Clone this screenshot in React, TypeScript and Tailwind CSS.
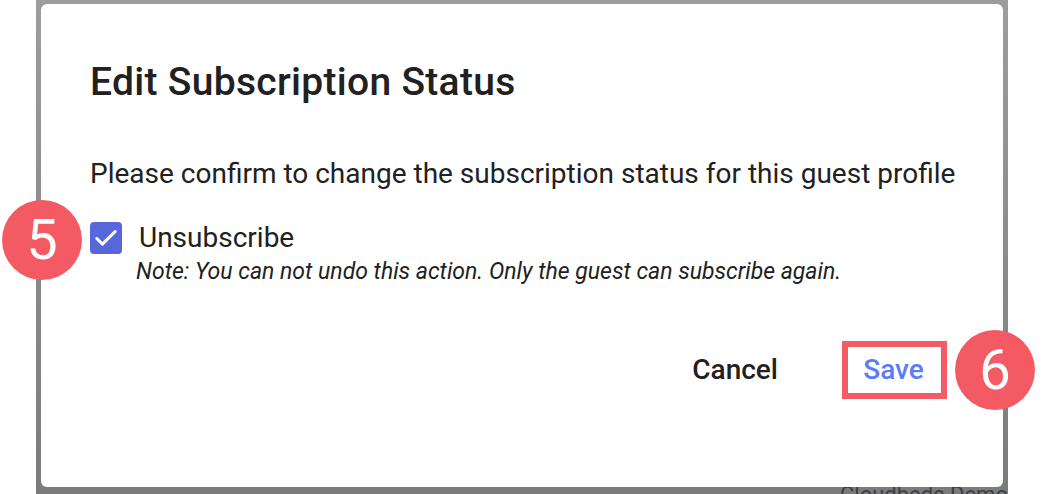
import React from 'react';

const font = { fontFamily: 'Roboto, "Noto Sans", sans-serif' };

// Numbered callout used in the annotated screenshot
function Badge({ n, className }: { n: string; className: string }) {
    return (
        <div className={`absolute w-[80px] h-[80px] rounded-full bg-[#f45a63] text-white flex items-center justify-center text-[56px] leading-none ${className}`}>
            {n}
        </div>
    );
}

export default function App() {
    return (
        <div className="relative w-[1042px] h-[494px] bg-white overflow-hidden" style={font}>
            <div className="flex h-full">
                <div className="w-[36px] bg-white" />
                {/* Backdrop */}
                <div className="relative w-[972px] h-full bg-gradient-to-b from-[#9d9d9d] to-[#7b7b7b] pt-[4px] pl-[5px]">
                    <div className="absolute left-[804px] top-[478px] text-[22px] text-[#3b3f46] whitespace-nowrap">Cloudbeds Demo</div>
                    {/* Dialog */}
                    <div className="relative w-[962px] h-[483px] bg-white rounded-[6px] pl-[49px] pt-[55px]">
                        <h2 className="text-[39px] font-medium text-[#212121] leading-[46px] tracking-[0.3px]">Edit Subscription Status</h2>
                        <p className="mt-[53px] text-[28px] text-[#212121] leading-[32px]">
                            Please confirm to change the subscription status for this guest profile
                        </p>
                        <div className="mt-[32px] flex items-center gap-[17px]">
                            <div className="w-[32px] h-[32px] rounded-[4px] bg-[#5866dc] flex items-center justify-center">
                                <svg width="26" height="26" viewBox="0 0 24 24" fill="none">
                                    <path d="M3.5 12.5l5.2 5.2L20.5 6" stroke="white" strokeWidth="2.8" strokeLinecap="round" strokeLinejoin="round" />
                                </svg>
                            </div>
                            <span className="text-[28px] text-[#212121] leading-[32px]">Unsubscribe</span>
                        </div>
                        <p className="ml-[46px] mt-[5px] text-[23px] italic text-[#212121] leading-[26px]">
                            Note: You can not undo this action. Only the guest can subscribe again.
                        </p>
                        <div className="mt-[56px] flex items-center justify-end pr-[56px]">
                            <button className="text-[28px] font-medium text-[#212121] mr-[64px] leading-[32px]">Cancel</button>
                            <div className="w-[105px] h-[58px] border-[6px] border-[#f35c66] flex items-center justify-center pr-[2px]">
                                <button className="text-[28px] font-medium text-[#5b7cf6] leading-[32px]">Save</button>
                            </div>
                        </div>
                    </div>
                </div>
                <div className="flex-1 bg-white" />
            </div>
            <Badge n="5" className="left-[2px] top-[200px]" />
            <Badge n="6" className="left-[955px] top-[330px]" />
        </div>
    );
}
